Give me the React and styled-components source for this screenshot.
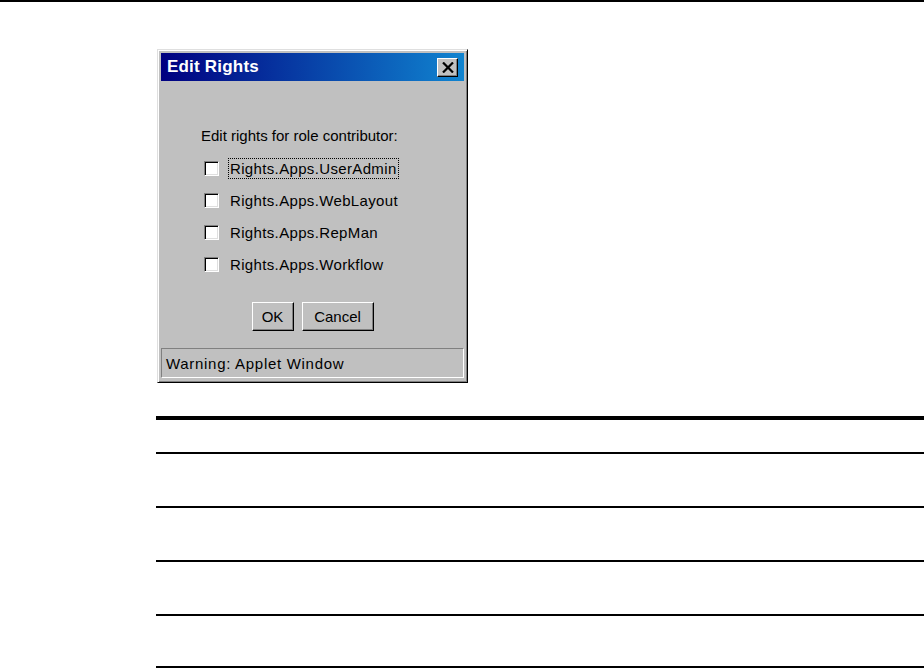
import styled, { createGlobalStyle } from 'styled-components'

const GlobalStyle = createGlobalStyle`
    html, body {
        margin: 0;
        padding: 0;
        background: #fff;
    }
    body {
        font-family: "Liberation Sans", Arial, sans-serif;
    }
`;

const rights = [
    'Rights.Apps.UserAdmin',
    'Rights.Apps.WebLayout',
    'Rights.Apps.RepMan',
    'Rights.Apps.Workflow',
];

export default function App() {
    return (
        <>
            <GlobalStyle />
            <Page>
                <TopRule />
                <Content>
                    <Dialog>
                        <TitleBar>
                            <TitleText>Edit Rights</TitleText>
                            <CloseButton>
                                <svg width="12" height="11" viewBox="0 0 12 11">
                                    <path d="M1 0.5 L11 10.5 M11 0.5 L1 10.5" stroke="#000" strokeWidth="2.2" />
                                </svg>
                            </CloseButton>
                        </TitleBar>
                        <Body>
                            <Prompt>Edit rights for role contributor:</Prompt>
                            <CheckList>
                                {rights.map((r, i) => (
                                    <CheckRow key={r}>
                                        <Box />
                                        <Label $focused={i === 0}>{r}</Label>
                                    </CheckRow>
                                ))}
                            </CheckList>
                            <Buttons>
                                <Button $w={42}>OK</Button>
                                <Button $w={72}>Cancel</Button>
                            </Buttons>
                        </Body>
                        <StatusBar>Warning: Applet Window</StatusBar>
                    </Dialog>
                    <Table>
                        <Row />
                        <Row />
                        <Row />
                        <Row />
                    </Table>
                </Content>
            </Page>
        </>
    )
}

const Page = styled.div`
    width: 924px;
    height: 669px;
    overflow: hidden;
`;
const TopRule = styled.div`
    height: 2px;
    background: #000;
`;
const Content = styled.div`
    padding-left: 156px;
    padding-top: 47px;
`;
const Dialog = styled.div`
    margin-left: 1px;
    width: 311px;
    box-sizing: border-box;
    background: #c0c0c0;
    border: 1px solid;
    border-color: #dfdfdf #000 #000 #dfdfdf;
    box-shadow: inset 1px 1px 0 #fff, inset -1px -1px 0 #808080;
    padding: 3px 3px 4px 3px;
    display: flex;
    flex-direction: column;
`;
const TitleBar = styled.div`
    height: 28px;
    background: linear-gradient(to right, #000080, #1084d0);
    display: flex;
    align-items: center;
    justify-content: space-between;
    padding: 0 6px 0 6px;
`;
const TitleText = styled.div`
    color: #fff;
    font-weight: bold;
    font-size: 17px;
    letter-spacing: 0.2px;
`;
const CloseButton = styled.div`
    width: 21px;
    height: 19px;
    box-sizing: border-box;
    background: #c0c0c0;
    border: 1px solid;
    border-color: #fff #000 #000 #fff;
    box-shadow: inset -1px -1px 0 #808080;
    display: flex;
    align-items: center;
    justify-content: center;
`;
const Body = styled.div`
    display: flex;
    flex-direction: column;
    align-items: center;
    padding-top: 46px;
`;
const Prompt = styled.div`
    align-self: flex-start;
    margin-left: 40px;
    font-size: 15px;
    color: #000;
    line-height: 18px;
`;
const CheckList = styled.div`
    display: flex;
    flex-direction: column;
    align-self: flex-start;
    margin-left: 43px;
    margin-top: 14px;
    gap: 14px;
`;
const CheckRow = styled.div`
    display: flex;
    align-items: center;
    height: 18px;
`;
const Box = styled.div`
    width: 15px;
    height: 15px;
    box-sizing: border-box;
    background: #fff;
    border: 1px solid;
    border-color: #808080 #fff #fff #808080;
    box-shadow: inset 1px 1px 0 #000, inset -1px -1px 0 #dfdfdf;
    margin-right: 10px;
`;
const Label = styled.div`
    font-size: 15px;
    line-height: 19px;
    letter-spacing: 0.35px;
    padding: 0 1px;
    color: #000;
    outline: ${p => (p.$focused ? '1px dotted #000' : 'none')};
`;
const Buttons = styled.div`
    display: flex;
    gap: 8px;
    margin-top: 29px;
`;
const Button = styled.div`
    width: ${p => p.$w}px;
    height: 29px;
    box-sizing: border-box;
    background: #c0c0c0;
    border: 1px solid;
    border-color: #fff #000 #000 #fff;
    box-shadow: inset -1px -1px 0 #808080;
    display: flex;
    align-items: center;
    justify-content: center;
    font-size: 15px;
    color: #000;
`;
const StatusBar = styled.div`
    margin-top: 17px;
    height: 30px;
    box-sizing: border-box;
    border: 1px solid;
    border-color: #808080 #fff #fff #808080;
    display: flex;
    align-items: center;
    padding-left: 4px;
    font-size: 15px;
    letter-spacing: 0.7px;
    color: #000;
`;
const Table = styled.div`
    margin-top: 33px;
    border-top: 4px solid #000;
    padding-top: 32px;
`;
const Row = styled.div`
    border-top: 2px solid #000;
    height: 52px;
    &:last-child {
        border-bottom: 2px solid #000;
        height: 50px;
    }
`;
